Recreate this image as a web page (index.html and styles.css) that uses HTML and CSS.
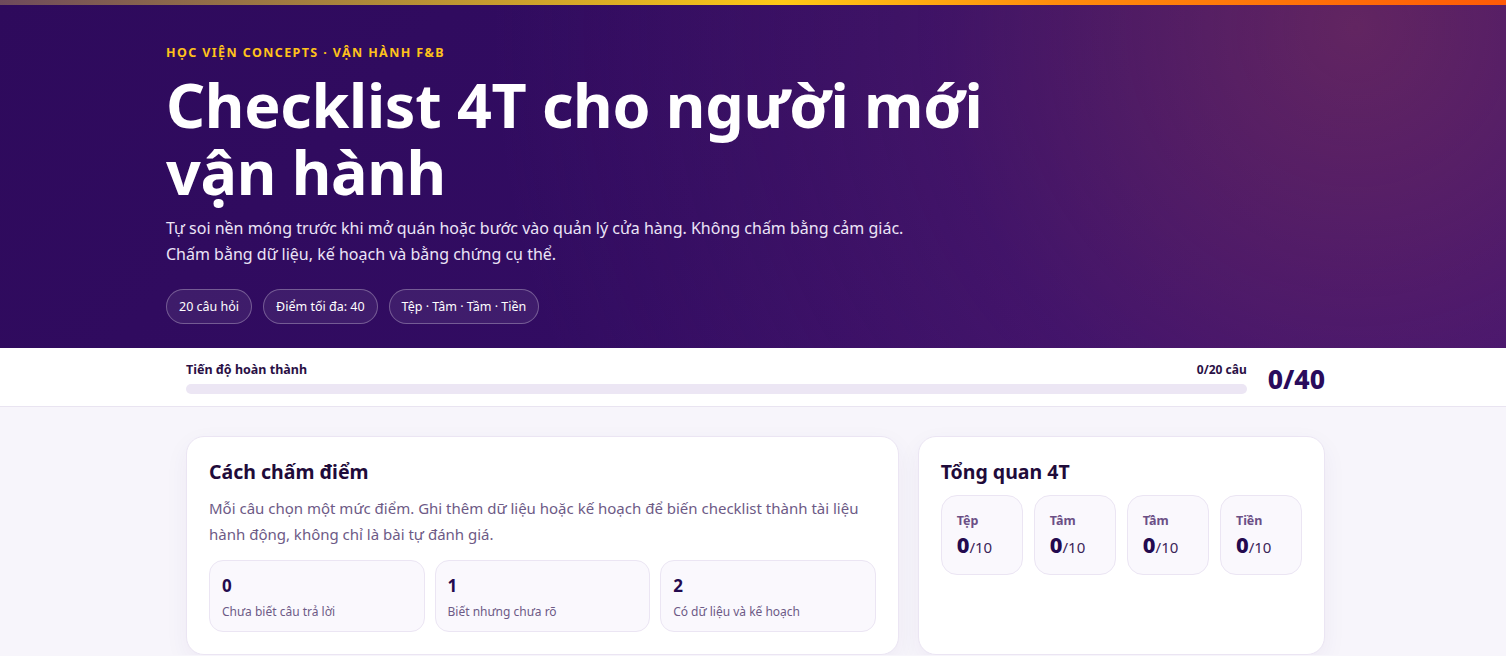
FILE: index.html
```html
<!DOCTYPE html>
<html lang="vi">
<head>
    <meta charset="UTF-8">
    <meta name="viewport" content="width=device-width, initial-scale=1.0">
    <title>Checklist 4T cho người mới vận hành</title>
    <link rel="stylesheet" href="styles.css">
</head>
<body>

    <!-- HERO -->
    <header class="hero">
        <div class="hero-inner">
            <p class="eyebrow">Học viện Concepts · Vận hành F&amp;B</p>
            <h1>Checklist 4T cho người mới vận hành</h1>
            <p class="lead">Tự soi nền móng trước khi mở quán hoặc bước vào quản lý cửa hàng. Không chấm bằng cảm giác. Chấm bằng dữ liệu, kế hoạch và bằng chứng cụ thể.</p>
            <div class="chips">
                <span class="chip">20 câu hỏi</span>
                <span class="chip">Điểm tối đa: 40</span>
                <span class="chip">Tệp · Tâm · Tầm · Tiền</span>
            </div>
        </div>
    </header>

    <!-- PROGRESS -->
    <div class="progress-bar">
        <div class="container progress-row">
            <div class="progress-main">
                <div class="progress-top">
                    <span class="progress-label">Tiến độ hoàn thành</span>
                    <span class="progress-count" id="answered">0/20 câu</span>
                </div>
                <div class="track"><div class="fill" style="width: 0%"></div></div>
            </div>
            <div class="total" id="total">0/40</div>
        </div>
    </div>

    <main class="container grid">
        <section class="card">
            <h2>Cách chấm điểm</h2>
            <p class="muted">Mỗi câu chọn một mức điểm. Ghi thêm dữ liệu hoặc kế hoạch để biến checklist thành tài liệu hành động, không chỉ là bài tự đánh giá.</p>
            <div class="levels">
                <div class="level">
                    <strong>0</strong>
                    <span>Chưa biết câu trả lời</span>
                </div>
                <div class="level">
                    <strong>1</strong>
                    <span>Biết nhưng chưa rõ</span>
                </div>
                <div class="level">
                    <strong>2</strong>
                    <span>Có dữ liệu và kế hoạch</span>
                </div>
            </div>
        </section>

        <section class="card">
            <h2>Tổng quan 4T</h2>
            <div class="pillars">
                <div class="pillar">
                    <span class="pillar-name">Tệp</span>
                    <div class="pillar-score"><b>0</b>/10</div>
                </div>
                <div class="pillar">
                    <span class="pillar-name">Tâm</span>
                    <div class="pillar-score"><b>0</b>/10</div>
                </div>
                <div class="pillar">
                    <span class="pillar-name">Tầm</span>
                    <div class="pillar-score"><b>0</b>/10</div>
                </div>
                <div class="pillar">
                    <span class="pillar-name">Tiền</span>
                    <div class="pillar-score"><b>0</b>/10</div>
                </div>
            </div>
        </section>
    </main>

</body>
</html>
```

FILE: styles.css
```css
body {
    font-family: "Noto Sans", "Open Sans", sans-serif;
    background-color: #f7f5fb;
    color: #1f0b3a;
    margin: 0;
    padding: 0;
}

.container {
    box-sizing: border-box;
    max-width: 1144px;
    margin: 0 auto;
    padding-left: 5px;
}

/* hero */
.hero {
    position: relative;
    background:
        radial-gradient(circle at 90% 8%, rgba(140, 60, 90, 0.5), rgba(110, 45, 115, 0.22) 30%, rgba(46, 11, 93, 0) 62%),
        linear-gradient(135deg, #2e0a5c 0%, #320c62 50%, #3c0f6e 100%);
    color: #fff;
    padding: 44px 0 24px;
}

.hero::before {
    content: "";
    position: absolute;
    top: 0;
    left: 0;
    right: 0;
    height: 5px;
    background: linear-gradient(90deg, #6e4a5c 0%, #b08a38 25%, #ffc816 52%, #ff8c0c 70%, #ff5a06 100%);
}

.hero-inner {
    max-width: 1174px;
    margin: 0 auto;
}

.eyebrow {
    margin: 0 0 10px;
    color: #ffc21a;
    font-size: 12.5px;
    font-weight: 700;
    letter-spacing: 1.4px;
    text-transform: uppercase;
}

.hero h1 {
    margin: 0;
    max-width: 880px;
    font-size: 61px;
    line-height: 1.1;
    font-weight: 700;
    letter-spacing: -0.3px;
}

.lead {
    margin: 10px 0 22px;
    max-width: 760px;
    font-size: 16px;
    line-height: 26px;
    color: #ece4f7;
}

.chips {
    display: flex;
    gap: 11px;
}

.chip {
    display: inline-flex;
    align-items: center;
    height: 33px;
    padding: 0 12px;
    border: 1px solid rgba(255, 255, 255, 0.28);
    border-radius: 999px;
    background: rgba(255, 255, 255, 0.07);
    font-size: 12.5px;
}

/* progress strip */
.progress-bar {
    background: #fff;
    border-bottom: 1px solid #e9e4f1;
}

.progress-row {
    display: flex;
    align-items: center;
    gap: 21px;
    height: 58px;
}

.progress-main {
    flex: 1;
}

.progress-top {
    display: flex;
    justify-content: space-between;
    align-items: baseline;
    margin-bottom: 6px;
}

.progress-label {
    font-size: 12.5px;
    font-weight: 700;
    color: #2a1045;
}

.progress-count {
    font-size: 12px;
    font-weight: 700;
    color: #2a1045;
}

.track {
    height: 10px;
    border-radius: 999px;
    background: #ece6f4;
    overflow: hidden;
}

.fill {
    height: 100%;
    background: #5b21b6;
}

.total {
    font-size: 26.5px;
    font-weight: 800;
    color: #2a0b5c;
    padding-top: 4px;
}

/* cards */
.grid {
    display: grid;
    grid-template-columns: 1.75fr 1fr;
    gap: 19px;
    padding-top: 29px;
}

.card {
    background: #fff;
    border: 1px solid #ebe5f3;
    border-radius: 18px;
    box-shadow: 0 8px 24px rgba(60, 20, 110, 0.05);
    padding: 18px 22px 22px;
}

.card h2 {
    margin: 3px 0 10px;
    font-size: 19.5px;
    font-weight: 700;
    color: #1f0b3a;
}

.muted {
    margin: 0 0 13px;
    font-size: 15px;
    line-height: 26px;
    color: #6d5a86;
}

.levels {
    display: grid;
    grid-template-columns: repeat(3, 1fr);
    gap: 10px;
}

.level {
    background: #faf8fd;
    border: 1px solid #ebe5f3;
    border-radius: 14px;
    padding: 13px 12px 10px;
}

.level strong {
    display: block;
    font-size: 17px;
    color: #240a4f;
    margin-bottom: 2px;
}

.level span {
    font-size: 12px;
    color: #6d5a86;
}

.pillars {
    display: grid;
    grid-template-columns: repeat(4, 1fr);
    gap: 11px;
}

.pillar {
    background: #faf8fd;
    border: 1px solid #ebe5f3;
    border-radius: 16px;
    padding: 16px 15px 15px;
}

.pillar-name {
    display: block;
    font-size: 12.5px;
    font-weight: 700;
    color: #6b4f86;
}

.pillar-score {
    font-size: 15px;
    color: #3a2458;
}

.pillar-score b {
    font-size: 22px;
    font-weight: 800;
    color: #240a4f;
}
```
